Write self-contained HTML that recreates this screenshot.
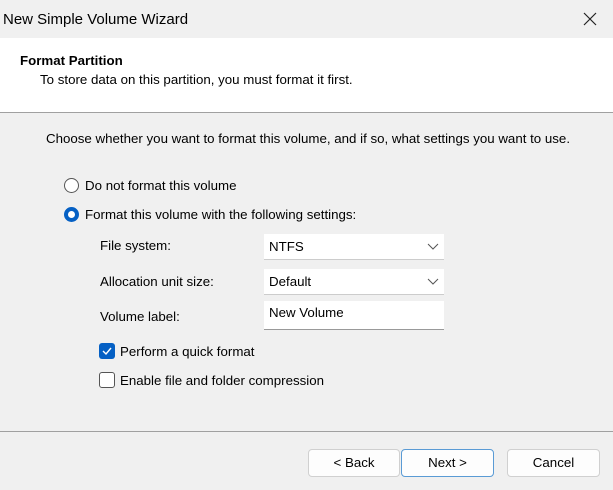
<!DOCTYPE html><html><head><style>
*{margin:0;padding:0;box-sizing:border-box}
body{width:613px;height:490px;background:#f0f0f0;font-family:"Liberation Sans",sans-serif;font-size:13.3px;color:#000;position:relative;overflow:hidden}
.a{position:absolute;white-space:nowrap}
.btn{position:absolute;top:449px;height:28px;background:#fdfdfd;border:1px solid #d0d0d0;border-radius:4px;text-align:center;line-height:26px;font-size:13.3px}
.sel{position:absolute;left:264px;width:180px;height:26px;background:#fff;border-bottom:1px solid #ccc;padding-left:5px;line-height:26px}
</style></head><body>
<div class="a" style="left:3px;top:11px;font-size:15px">New Simple Volume Wizard</div>
<svg class="a" style="left:583px;top:12px" width="14" height="14"><path d="M1 1L13 13M13 1L1 13" stroke="#222" stroke-width="1.2"/></svg>
<div class="a" style="left:0;top:38px;width:613px;height:75px;background:#fff;border-bottom:1px solid #a0a0a0"></div>
<div class="a" style="left:20px;top:53px;font-weight:bold">Format Partition</div>
<div class="a" style="left:40px;top:72px">To store data on this partition, you must format it first.</div>
<div class="a" style="left:46px;top:131px">Choose whether you want to format this volume, and if so, what settings you want to use.</div>
<div class="a" style="left:64px;top:178px;width:15px;height:15px;border:1px solid #555;border-radius:50%;background:#fff"></div>
<div class="a" style="left:85px;top:178px">Do not format this volume</div>
<div class="a" style="left:64px;top:207px;width:15px;height:15px;border-radius:50%;background:#0560c4"><div style="margin:4px;width:7px;height:7px;border-radius:50%;background:#fff"></div></div>
<div class="a" style="left:85px;top:207px">Format this volume with the following settings:</div>
<div class="a" style="left:100px;top:238px">File system:</div>
<div class="sel" style="top:234px">NTFS<svg style="position:absolute;right:5px;top:9px" width="12" height="8"><path d="M1 1L6 6L11 1" stroke="#555" fill="none"/></svg></div>
<div class="a" style="left:100px;top:274px">Allocation unit size:</div>
<div class="sel" style="top:269px">Default<svg style="position:absolute;right:5px;top:9px" width="12" height="8"><path d="M1 1L6 6L11 1" stroke="#555" fill="none"/></svg></div>
<div class="a" style="left:100px;top:309px">Volume label:</div>
<div class="sel" style="top:301px;height:29px;line-height:24px;border-bottom:1px solid #999">New Volume</div>
<div class="a" style="left:99px;top:343px;width:16px;height:16px;border-radius:3px;background:#0560c4"><svg width="16" height="16"><path d="M4 8L7 11L12 5" stroke="#fff" stroke-width="1.4" fill="none"/></svg></div>
<div class="a" style="left:120px;top:344px">Perform a quick format</div>
<div class="a" style="left:99px;top:372px;width:16px;height:16px;border-radius:3px;border:1px solid #555;background:#fff"></div>
<div class="a" style="left:120px;top:373px">Enable file and folder compression</div>
<div class="a" style="left:0;top:431px;width:613px;height:1px;background:#a0a0a0"></div>
<div class="btn" style="left:308px;width:92px">&lt; Back</div>
<div class="btn" style="left:401px;width:93px;border-color:#5a9bd5">Next &gt;</div>
<div class="btn" style="left:507px;width:93px">Cancel</div>
</body></html>
